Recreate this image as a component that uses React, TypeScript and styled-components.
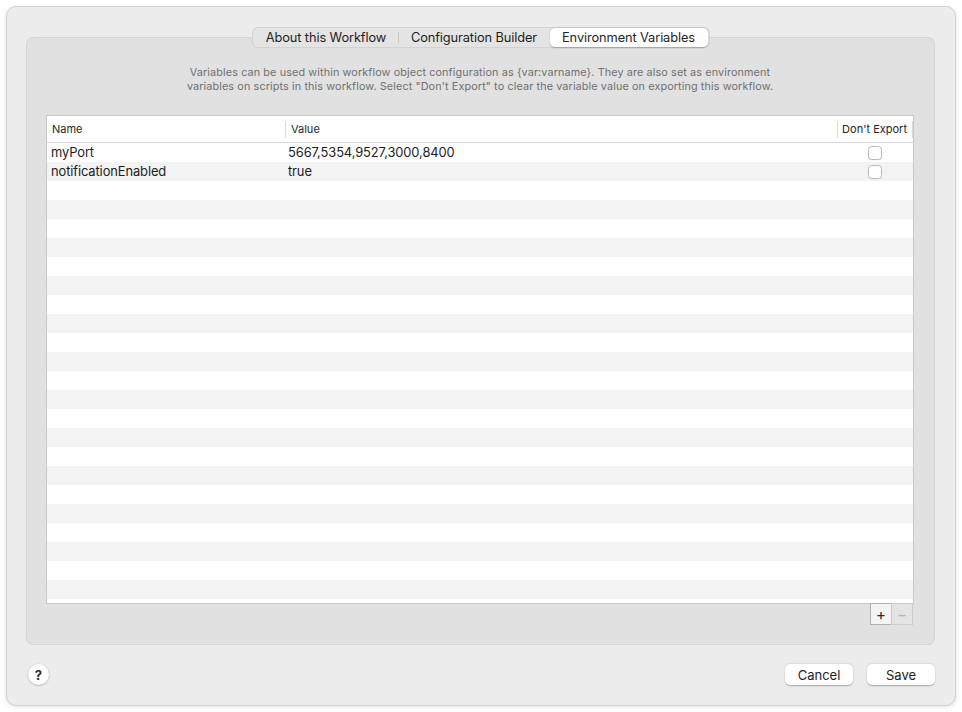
import React from "react";
import styled, { createGlobalStyle } from "styled-components";

const Global = createGlobalStyle`
  html, body { margin: 0; padding: 0; background: #ffffff; }
  body { font-family: "Inter", "Roboto", "Noto Sans", sans-serif; -webkit-font-smoothing: antialiased; }
  * { box-sizing: border-box; }
`;

const Window = styled.div`
  margin: 6px;
  width: 950px;
  height: 700px;
  background: #ececec;
  border: 1px solid #d2d2d2;
  border-radius: 10px;
  box-shadow: 0 1px 4px rgba(0, 0, 0, 0.12);
  padding: 0 20px 0 19px;
  display: flex;
  flex-direction: column;
`;

const GroupBox = styled.div`
  margin-top: 30px;
  height: 608px;
  background: #e1e1e1;
  border: 1px solid #d6d6d6;
  border-radius: 7px;
  padding: 0 20px 0 19px;
  display: flex;
  flex-direction: column;
`;

const TabBar = styled.div`
  align-self: center;
  margin-top: -11px;
  display: flex;
  align-items: center;
  height: 21px;
  padding: 0 1px;
  background: #e4e4e4;
  border: 1px solid #d3d3d3;
  border-radius: 6px;
  margin-left: 1px;
`;

const Tab = styled.div<{ $active?: boolean; $sep?: boolean; $w: number }>`
  height: 19px;
  display: flex;
  align-items: center;
  justify-content: center;
  width: ${(p) => p.$w}px;
  font-size: 12.8px;
  letter-spacing: -0.1px;
  color: #1e1e1e;
  border-radius: 5px;
  background: ${(p) => (p.$active ? "#ffffff" : "transparent")};
  box-shadow: ${(p) => (p.$active ? "0 0.5px 1.5px rgba(0,0,0,0.25)" : "none")};
  position: relative;
  &::after {
    content: "";
    display: ${(p) => (p.$sep ? "block" : "none")};
    position: absolute;
    right: 0;
    top: 4px;
    height: 11px;
    width: 1px;
    background: #c8c8c8;
  }
`;

const Description = styled.p`
  margin: 18px 0 0 0;
  text-align: center;
  font-size: 10.8px;
  line-height: 14px;
  color: #707070;
  letter-spacing: 0.12px;
`;

const Table = styled.div`
  margin-top: 21px;
  height: 489px;
  background: #ffffff;
  border: 1px solid #c9c9c9;
  display: flex;
  flex-direction: column;
  overflow: hidden;
`;

const HeaderRow = styled.div`
  display: grid;
  grid-template-columns: 238px 552px 1fr;
  height: 27px;
  flex-shrink: 0;
  border-bottom: 1px solid #dcdcdc;
  align-items: center;
`;

const HeaderCell = styled.div<{ $sep?: boolean; $right?: boolean }>`
  font-size: 11px;
  color: #262626;
  display: flex;
  align-items: center;
  justify-content: ${(p) => (p.$right ? "flex-end" : "flex-start")};
  padding: ${(p) => (p.$right ? "0 5px 1px 0" : "0 0 1px 5px")};
  border-left: ${(p) => (p.$sep ? "1px solid #d8d8d8" : "none")};
  border-right: ${(p) => (p.$right ? "1px solid #d8d8d8" : "none")};
  margin: ${(p) => (p.$sep ? "5px 0" : "0")};
  height: ${(p) => (p.$sep ? "17px" : "100%")};
`;

const Row = styled.div<{ $alt: boolean }>`
  display: grid;
  grid-template-columns: 238px 552px 1fr;
  height: 19px;
  flex-shrink: 0;
  align-items: center;
  background: ${(p) => (p.$alt ? "#f3f3f3" : "#ffffff")};
`;

const Cell = styled.div<{ $pad?: number }>`
  font-size: 12.9px;
  letter-spacing: -0.1px;
  color: #1d1d1d;
  padding-left: ${(p) => p.$pad ?? 4}px;
  white-space: nowrap;
`;

const CheckCell = styled.div`
  display: flex;
  justify-content: flex-end;
  padding-right: 31px;
`;

const Check = styled.div`
  width: 14px;
  height: 14px;
  border: 1px solid #b9b9b9;
  border-radius: 3.5px;
  background: #ffffff;
  box-shadow: 0 0.5px 0.5px rgba(0,0,0,0.06);
`;

const PlusMinus = styled.div`
  align-self: flex-end;
  margin-right: 1px;
  display: flex;
`;

const PMButton = styled.div<{ $disabled?: boolean }>`
  width: 22px;
  height: 22px;
  margin-top: -1px;
  border: 1px solid #b9b9b9;
  margin-left: -1px;
  background: ${(p) => (p.$disabled ? "#e4e4e4" : "#f4f4f4")};
  color: ${(p) => (p.$disabled ? "#b4b4b4" : "#2a2a2a")};
  border-color: ${(p) => (p.$disabled ? "#cbcbcb" : "#b2b2b2")};
  display: flex;
  align-items: center;
  justify-content: center;
  font-size: 15px;
  line-height: 1;
`;

const Footer = styled.div`
  margin-top: 19px;
  display: flex;
  align-items: center;
  padding-left: 2px;
`;

const HelpButton = styled.div`
  width: 21px;
  height: 21px;
  border-radius: 50%;
  background: #ffffff;
  box-shadow: 0 0.5px 2px rgba(0, 0, 0, 0.3);
  display: flex;
  align-items: center;
  justify-content: center;
  font-size: 13px;
  font-weight: 700;
  color: #2a2a2a;
`;

const Spacer = styled.div`
  flex: 1;
`;

const PushButton = styled.div`
  width: 68px;
  height: 21px;
  border-radius: 5px;
  background: #ffffff;
  box-shadow: 0 0.5px 1.5px rgba(0, 0, 0, 0.3);
  display: flex;
  align-items: center;
  justify-content: center;
  font-size: 13px;
  color: #1e1e1e;
  margin-left: 14px;
`;

const rows = [
  { name: "myPort", value: "5667,5354,9527,3000,8400" },
  { name: "notificationEnabled", value: "true" },
];

export default function App() {
  const all = Array.from({ length: 25 }, (_, i) => rows[i] ?? null);
  return (
    <>
      <Global />
      <Window>
        <GroupBox>
          <TabBar>
            <Tab $w={145} $sep>About this Workflow</Tab>
            <Tab $w={151}>Configuration Builder</Tab>
            <Tab $w={158} $active>Environment Variables</Tab>
          </TabBar>
          <Description>
            Variables can be used within workflow object configuration as {"{var:varname}"}. They are also set as environment
            <br />
            variables on scripts in this workflow. Select "Don't Export" to clear the variable value on exporting this workflow.
          </Description>
          <Table>
            <HeaderRow>
              <HeaderCell>Name</HeaderCell>
              <HeaderCell $sep>Value</HeaderCell>
              <HeaderCell $sep $right>Don't Export</HeaderCell>
            </HeaderRow>
            {all.map((r, i) => (
              <Row key={i} $alt={i % 2 === 1}>
                <Cell>{r ? r.name : ""}</Cell>
                <Cell $pad={3}>{r ? r.value : ""}</Cell>
                <CheckCell>{r ? <Check /> : null}</CheckCell>
              </Row>
            ))}
          </Table>
          <PlusMinus>
            <PMButton>+</PMButton>
            <PMButton $disabled>−</PMButton>
          </PlusMinus>
        </GroupBox>
        <Footer>
          <HelpButton>?</HelpButton>
          <Spacer />
          <PushButton>Cancel</PushButton>
          <PushButton>Save</PushButton>
        </Footer>
      </Window>
    </>
  );
}
